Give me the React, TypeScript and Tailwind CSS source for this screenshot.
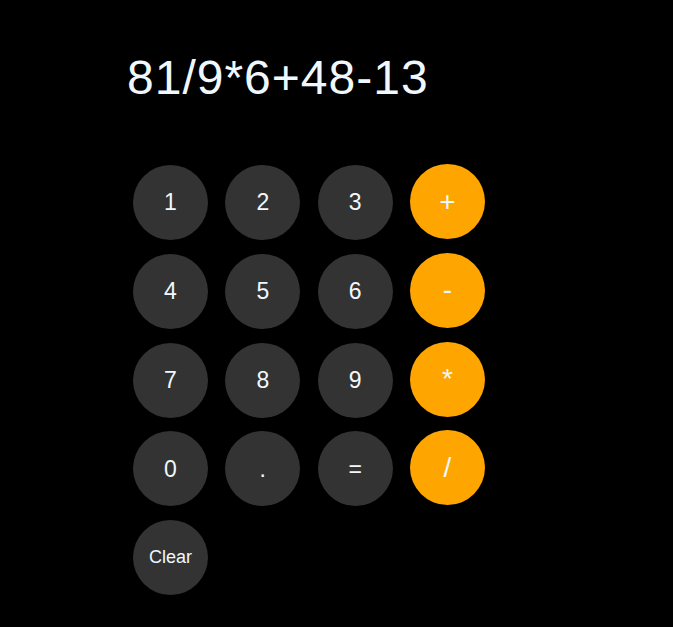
const KEYS: { label: string; op?: boolean }[] = [
  { label: "1" },
  { label: "2" },
  { label: "3" },
  { label: "+", op: true },
  { label: "4" },
  { label: "5" },
  { label: "6" },
  { label: "-", op: true },
  { label: "7" },
  { label: "8" },
  { label: "9" },
  { label: "*", op: true },
  { label: "0" },
  { label: "." },
  { label: "=" },
  { label: "/", op: true },
];

export default function App() {
  return (
    <div
      className="min-h-screen bg-black pt-[54px] pl-[127px] text-[#f0f8ff]"
      style={{ fontFamily: '"Liberation Sans", Arial, sans-serif' }}
    >
      {/* Display */}
      <div className="text-[48px] leading-[48px] tracking-[1px]">81/9*6+48-13</div>

      {/* Keypad */}
      <div className="mt-[63px] ml-[6px] grid w-max grid-cols-[repeat(4,75px)] gap-x-[17.3px] gap-y-[13.8px]">
        {KEYS.map(({ label, op }) => (
          <button
            key={label}
            className={
              op
                ? "flex h-[75px] w-[75px] -translate-y-px items-center justify-center rounded-full bg-[#ffa500] text-[28px] text-[#f0f8ff]"
                : "flex h-[75px] w-[75px] items-center justify-center rounded-full bg-[#333333] text-[23px] text-[#f0f8ff]"
            }
          >
            {label}
          </button>
        ))}
        <button className="flex h-[75px] w-[75px] items-center justify-center rounded-full bg-[#333333] text-[18px] text-[#f0f8ff]">
          Clear
        </button>
      </div>
    </div>
  );
}
